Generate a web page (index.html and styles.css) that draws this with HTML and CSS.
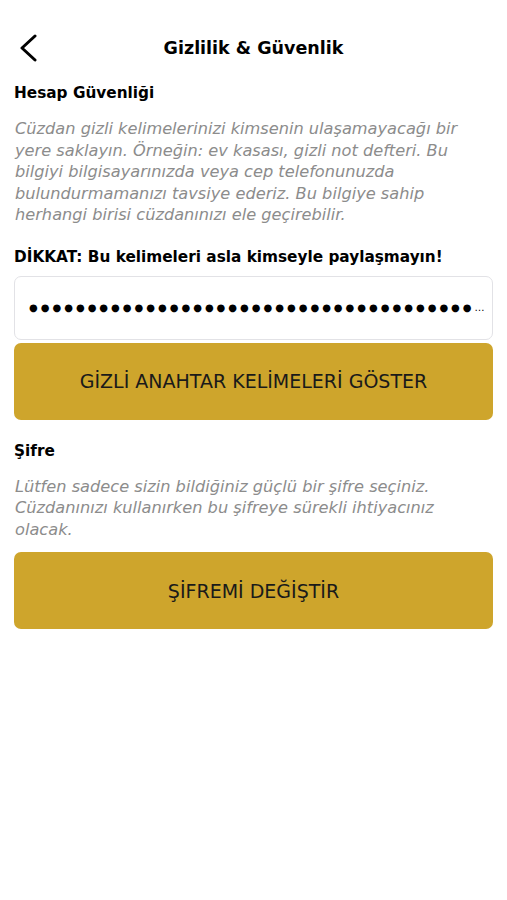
FILE: index.html
```html
<!DOCTYPE html>
<html lang="tr">
<head>
  <meta charset="UTF-8">
  <meta name="viewport" content="width=device-width, initial-scale=1.0">
  <title>Gizlilik &amp; Güvenlik</title>
  <link rel="stylesheet" href="styles.css">
</head>
<body>
  <div class="screen">
    <header class="nav-bar">
      <button class="back-btn" aria-label="Geri">
        <svg width="18" height="28" viewBox="0 0 18 28">
          <path d="M16 2 L3 14 L16 26" fill="none" stroke="#000" stroke-width="3" stroke-linecap="round" stroke-linejoin="round"/>
        </svg>
      </button>
      <h1 class="nav-title">Gizlilik &amp; Güvenlik</h1>
    </header>

    <section class="section">
      <h2 class="section-title">Hesap Güvenliği</h2>
      <p class="hint">Cüzdan gizli kelimelerinizi kimsenin ulaşamayacağı bir yere saklayın. Örneğin: ev kasası, gizli not defteri. Bu bilgiyi bilgisayarınızda veya cep telefonunuzda bulundurmamanızı tavsiye ederiz. Bu bilgiye sahip herhangi birisi cüzdanınızı ele geçirebilir.</p>
      <h2 class="section-title warning">DİKKAT: Bu kelimeleri asla kimseyle paylaşmayın!</h2>
      <div class="secret-box">
        <span class="secret-dots">●●●●●●●●●●●●●●●●●●●●●●●●●●●●●●●●●●●●●●●●●●●●●●●●●●●●●●●●●●●●</span>
      </div>
      <button class="gold-btn">GİZLİ ANAHTAR KELİMELERİ GÖSTER</button>
    </section>

    <section class="section">
      <h2 class="section-title">Şifre</h2>
      <p class="hint">Lütfen sadece sizin bildiğiniz güçlü bir şifre seçiniz. Cüzdanınızı kullanırken bu şifreye sürekli ihtiyacınız olacak.</p>
      <button class="gold-btn">ŞİFREMİ DEĞİŞTİR</button>
    </section>
  </div>
</body>
</html>
```

FILE: styles.css
```css
body {
  margin: 0;
  background: #fff;
  color: #000;
  font-family: 'DejaVu Sans', Verdana, sans-serif;
}
.screen {
  padding: 0 14px;
}
.nav-bar {
  position: relative;
  display: flex;
  align-items: center;
  justify-content: center;
  height: 56px;
  padding-top: 20px;
}
.back-btn {
  position: absolute;
  left: 5px;
  top: 34px;
  background: none;
  border: 0;
  padding: 0;
  line-height: 0;
  cursor: pointer;
}
.nav-title {
  margin: 0;
  font-size: 17.5px;
  font-weight: 700;
}
.section-title {
  margin: 6px 0 0;
  font-size: 15.3px;
  font-weight: 700;
  line-height: 22px;
}
.hint {
  margin: 14px 1px 0;
  font-size: 16.2px;
  font-style: italic;
  line-height: 21.5px;
  color: #8c8c8c;
}
.warning {
  margin-top: 20px;
}
.secret-box {
  margin-top: 8px;
  height: 62px;
  border: 1px solid #e2e2e6;
  border-radius: 7px;
  display: flex;
  align-items: center;
  padding: 0 4px 0 14px;
  overflow: hidden;
}
.secret-dots {
  display: block;
  white-space: nowrap;
  overflow: hidden;
  text-overflow: ellipsis;
  font-family: 'DejaVu Sans', sans-serif;
  font-size: 10px;
  letter-spacing: 3px;
}
.gold-btn {
  display: block;
  width: 100%;
  height: 77px;
  margin-top: 3px;
  border: 0;
  border-radius: 7px;
  background: #cea52c;
  color: #1a1a1a;
  font-family: 'DejaVu Sans', Verdana, sans-serif;
  font-size: 19px;
  cursor: pointer;
}
.section + .section {
  margin-top: 20px;
}
.section + .section .gold-btn {
  margin-top: 12px;
}
```
